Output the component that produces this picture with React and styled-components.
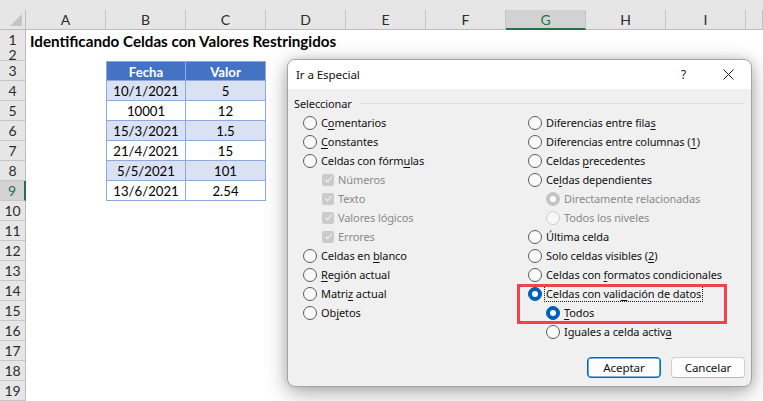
import React from "react";
import styled, { createGlobalStyle } from "styled-components";

const GlobalStyle = createGlobalStyle`
  html, body { margin: 0; padding: 0; background: #fff; overflow: hidden; }
  * { box-sizing: border-box; }
`;

const SHEET_FONT = `Lato, "Liberation Sans", sans-serif`;
const UI_FONT = `"Noto Sans", "Open Sans", sans-serif`;
const GRID = "26px repeat(9, 80px) 1fr";

const Page = styled.div`
  position: relative;
  width: 763px;
  height: 401px;
  overflow: hidden;
  background: #fff;
  font-family: ${SHEET_FONT};
`;

const TopStrip = styled.div`
  height: 10px;
  background: #e6e6e6;
`;

const Row = styled.div`
  display: grid;
  grid-template-columns: ${GRID};
  height: ${(p) => p.$h}px;
`;

const Corner = styled.div`
  position: relative;
  background: #e6e6e6;
  border-right: 1px solid #bcbcbc;
  border-bottom: 1px solid #bcbcbc;
  &::after {
    content: "";
    position: absolute;
    right: 3px;
    bottom: 3px;
    width: 0;
    height: 0;
    border-left: 12px solid transparent;
    border-bottom: 12px solid #c4c4c4;
  }
`;

const ColHead = styled.div`
  display: flex;
  align-items: center;
  justify-content: center;
  background: ${(p) => (p.$active ? "#d2d2d2" : "#e6e6e6")};
  border-right: 1px solid #c3c3c3;
  border-bottom: ${(p) => (p.$active ? "2px solid #217346" : "1px solid #bcbcbc")};
  color: ${(p) => (p.$active ? "#217346" : "#2b2b2b")};
  font-size: 14px;
  padding-top: ${(p) => (p.$active ? "1px" : "0")};
`;

const RowHead = styled.div`
  display: flex;
  align-items: ${(p) => (p.$short ? "flex-end" : "center")};
  justify-content: center;
  overflow: hidden;
  background: ${(p) => (p.$active ? "#d2d2d2" : "#e6e6e6")};
  border-right: ${(p) => (p.$active ? "2px solid #217346" : "1px solid #bcbcbc")};
  border-bottom: 1px solid #c6c6c6;
  color: ${(p) => (p.$active ? "#217346" : "#2b2b2b")};
  font-size: 14px;
  line-height: ${(p) => (p.$short ? "10px" : "normal")};
`;

const Cell = styled.div``;

const TitleCell = styled.div`
  position: relative;
  z-index: 1;
  display: flex;
  align-items: center;
  padding-left: 4px;
  padding-top: 3px;
  white-space: nowrap;
  overflow: visible;
  font-weight: 700;
  font-size: 15.2px;
  color: #000;
`;

const TableCell = styled.div`
  display: flex;
  align-items: center;
  justify-content: center;
  font-size: 13.2px;
  color: ${(p) => (p.$head ? "#fff" : "#000")};
  font-weight: ${(p) => (p.$head ? 700 : 400)};
  background: ${(p) => (p.$head ? "#4472c4" : p.$band ? "#d9e1f2" : "#fff")};
  border-right: 1px solid #8ea9db;
  border-bottom: 1px solid #8ea9db;
  border-left: ${(p) => (p.$first ? "1px solid #8ea9db" : "none")};
  border-top: ${(p) => (p.$top ? "1px solid #8ea9db" : "none")};
  padding-top: 1px;
`;

/* Dialog */

const Dialog = styled.div`
  position: absolute;
  left: 287px;
  top: 59px;
  width: 465px;
  height: 328px;
  display: flex;
  flex-direction: column;
  background: #f0f0f0;
  border: 1px solid #a3a3a3;
  border-radius: 8px;
  box-shadow: 0 6px 22px rgba(0, 0, 0, 0.32), 0 0 10px rgba(0, 0, 0, 0.12);
  font-family: ${UI_FONT};
  font-size: 11px;
  letter-spacing: -0.1px;
  color: #111;
  overflow: hidden;
`;

const TitleBar = styled.div`
  height: 29px;
  flex: none;
  display: flex;
  align-items: center;
  background: #fff;
  padding-left: 8px;
`;

const Title = styled.div`
  flex: 1;
  font-size: 11.6px;
`;

const TitleButton = styled.div`
  width: 45px;
  height: 29px;
  display: flex;
  align-items: center;
  justify-content: center;
  font-size: 12px;
  color: #1b1b1b;
`;

const Body = styled.div`
  flex: 1;
  display: flex;
  flex-direction: column;
  padding: 4px 6px 8px 6px;
`;

const Legend = styled.div`
  height: 20px;
  display: flex;
  align-items: center;
  gap: 8px;
`;

const LegendLine = styled.div`
  flex: 1;
  height: 1px;
  background: #dcdcdc;
  margin-top: 1px;
`;

const Columns = styled.div`
  display: grid;
  grid-template-columns: 225px 1fr;
  padding-left: 9px;
`;

const Column = styled.div`
  display: flex;
  flex-direction: column;
`;

const Option = styled.div`
  height: 19px;
  display: flex;
  align-items: center;
  gap: 4px;
  padding-left: ${(p) => (p.$indent ? p.$indent : 0)}px;
  color: ${(p) => (p.$disabled ? "#8a8a8a" : "#111")};
  white-space: nowrap;
`;

const Radio = styled.span`
  flex: none;
  width: 14px;
  height: 14px;
  border-radius: 50%;
  display: flex;
  align-items: center;
  justify-content: center;
  border: ${(p) =>
    p.$checked
      ? p.$disabled
        ? "1px solid #c6c6c6"
        : "1px solid #005fb8"
      : p.$disabled
      ? "1px solid #cdcdcd"
      : "1px solid #5a5a5a"};
  background: ${(p) =>
    p.$checked ? (p.$disabled ? "#c6c6c6" : "#005fb8") : p.$disabled ? "#f7f7f7" : "#f9f9f9"};
  &::after {
    content: "";
    display: ${(p) => (p.$checked ? "block" : "none")};
    width: 6px;
    height: 6px;
    border-radius: 50%;
    background: #fff;
  }
`;

const CheckBox = styled.span`
  flex: none;
  width: 12px;
  height: 12px;
  border-radius: 2px;
  background: #cbcbcb;
  display: flex;
  align-items: center;
  justify-content: center;
`;

const Label = styled.span`
  line-height: 15px;
  padding: 0 1px;
  margin-left: -1px;
  outline: ${(p) => (p.$focus ? "1px dotted #1b1b1b" : "none")};
  outline-offset: 0;
`;

const Key = styled.span`
  text-decoration: underline;
  text-underline-offset: 2px;
`;

const Buttons = styled.div`
  margin-top: auto;
  display: flex;
  justify-content: flex-end;
  gap: 10px;
`;

const Button = styled.div`
  width: 74px;
  height: 21px;
  display: flex;
  align-items: center;
  justify-content: center;
  border-radius: 4px;
  background: #fdfdfd;
  font-size: 11.6px;
  color: #111;
  border: 1px solid ${(p) => (p.$primary ? "#0067c0" : "#d0d0d0")};
  border-bottom-color: ${(p) => (p.$primary ? "#0067c0" : "#b8b8b8")};
  box-shadow: ${(p) => (p.$primary ? "inset 0 0 0 0.6px #0067c0" : "none")};
`;

const Highlight = styled.div`
  position: absolute;
  left: 517px;
  top: 284px;
  width: 210px;
  height: 40px;
  border: 3px solid #f0444c;
  pointer-events: none;
`;

const Check = () => (
  <svg width="9" height="9" viewBox="0 0 9 9">
    <path d="M1.5 4.6 L3.6 6.6 L7.6 2.2" fill="none" stroke="#f2f2f2" strokeWidth="1.1" />
  </svg>
);

const CloseIcon = () => (
  <svg width="11" height="11" viewBox="0 0 11 11">
    <path d="M0.5 0.5 L10.5 10.5 M10.5 0.5 L0.5 10.5" stroke="#1b1b1b" strokeWidth="1" />
  </svg>
);

const LabelText = ({ parts, focus }) => (
  <Label $focus={focus}>
    {parts[0]}
    {parts[1] ? <Key>{parts[1]}</Key> : null}
    {parts[2] || ""}
  </Label>
);

const leftOptions = [
  { type: "radio", parts: ["C", "o", "mentarios"] },
  { type: "radio", parts: ["", "C", "onstantes"] },
  { type: "radio", parts: ["Celdas con fórm", "u", "las"] },
  { type: "check", parts: ["Números"], disabled: true },
  { type: "check", parts: ["Texto"], disabled: true },
  { type: "check", parts: ["Valores lógicos"], disabled: true },
  { type: "check", parts: ["Errores"], disabled: true },
  { type: "radio", parts: ["Celdas en ", "b", "lanco"] },
  { type: "radio", parts: ["", "R", "egión actual"] },
  { type: "radio", parts: ["Matri", "z", " actual"] },
  { type: "radio", parts: ["Ob", "j", "etos"] },
];

const rightOptions = [
  { type: "radio", parts: ["Diferencias entre fila", "s", ""] },
  { type: "radio", parts: ["Diferencias entre columnas (", "1", ")"] },
  { type: "radio", parts: ["Celdas ", "p", "recedentes"] },
  { type: "radio", parts: ["Ce", "l", "das dependientes"] },
  { type: "radio", sub: true, disabled: true, checked: true, parts: ["Directamente relacionadas"] },
  { type: "radio", sub: true, disabled: true, parts: ["Todos los niveles"] },
  { type: "radio", parts: ["Última celda"] },
  { type: "radio", parts: ["Solo celdas visibles (", "2", ")"] },
  { type: "radio", parts: ["Celdas con ", "f", "ormatos condicionales"] },
  { type: "radio", checked: true, focus: true, parts: ["Celdas con vali", "d", "ación de datos"] },
  { type: "radio", sub: true, checked: true, parts: ["", "T", "odos"] },
  { type: "radio", sub: true, parts: ["Iguales a celda activ", "a", ""] },
];

const OptionItem = ({ o }) => {
  if (o.type === "check") {
    return (
      <Option $indent={19} $disabled={o.disabled}>
        <CheckBox>
          <Check />
        </CheckBox>
        <LabelText parts={o.parts} />
      </Option>
    );
  }
  return (
    <Option $indent={o.sub ? 18 : 0} $disabled={o.disabled}>
      <Radio $checked={o.checked} $disabled={o.disabled} />
      <LabelText parts={o.parts} focus={o.focus} />
    </Option>
  );
};

const columns = ["A", "B", "C", "D", "E", "F", "G", "H", "I", ""];

const tableData = [
  ["10/1/2021", "5"],
  ["10001", "12"],
  ["15/3/2021", "1.5"],
  ["21/4/2021", "15"],
  ["5/5/2021", "101"],
  ["13/6/2021", "2.54"],
];

const EmptyCells = ({ n }) =>
  Array.from({ length: n }).map((_, i) => <Cell key={i} />);

export default function App() {
  const rows = [];
  rows.push(
    <Row $h={20} key="r1">
      <RowHead>1</RowHead>
      <TitleCell>Identificando Celdas con Valores Restringidos</TitleCell>
      <EmptyCells n={9} />
    </Row>
  );
  rows.push(
    <Row $h={12} key="r2">
      <RowHead $short>2</RowHead>
      <EmptyCells n={10} />
    </Row>
  );
  rows.push(
    <Row $h={20} key="r3">
      <RowHead>3</RowHead>
      <Cell />
      <TableCell $head $first $top>Fecha</TableCell>
      <TableCell $head $top>Valor</TableCell>
      <EmptyCells n={7} />
    </Row>
  );
  tableData.forEach((d, i) => {
    const n = i + 4;
    rows.push(
      <Row $h={20} key={"r" + n}>
        <RowHead $active={n === 9}>{n}</RowHead>
        <Cell />
        <TableCell $first $band={i % 2 === 0}>{d[0]}</TableCell>
        <TableCell $band={i % 2 === 0}>{d[1]}</TableCell>
        <EmptyCells n={7} />
      </Row>
    );
  });
  for (let n = 10; n <= 19; n++) {
    rows.push(
      <Row $h={20} key={"r" + n}>
        <RowHead>{n}</RowHead>
        <EmptyCells n={10} />
      </Row>
    );
  }

  return (
    <Page>
      <GlobalStyle />
      <TopStrip />
      <Row $h={19}>
        <Corner />
        {columns.map((c, i) => (
          <ColHead key={i} $active={c === "G"}>
            {c}
          </ColHead>
        ))}
      </Row>
      {rows}

      <Dialog>
        <TitleBar>
          <Title>Ir a Especial</Title>
          <TitleButton>?</TitleButton>
          <TitleButton>
            <CloseIcon />
          </TitleButton>
        </TitleBar>
        <Body>
          <Legend>
            <span>Seleccionar</span>
            <LegendLine />
          </Legend>
          <Columns>
            <Column>
              {leftOptions.map((o, i) => (
                <OptionItem o={o} key={i} />
              ))}
            </Column>
            <Column>
              {rightOptions.map((o, i) => (
                <OptionItem o={o} key={i} />
              ))}
            </Column>
          </Columns>
          <Buttons>
            <Button $primary>Aceptar</Button>
            <Button>Cancelar</Button>
          </Buttons>
        </Body>
      </Dialog>
      <Highlight />
    </Page>
  );
}
